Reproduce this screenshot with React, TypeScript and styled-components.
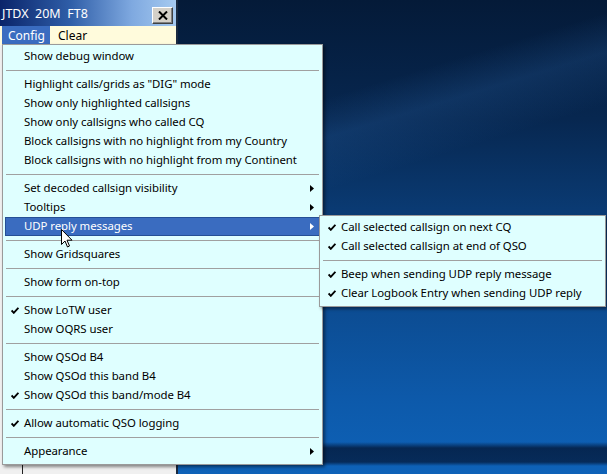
import React from "react";
import styled, { createGlobalStyle } from "styled-components";

const Global = createGlobalStyle`
  html, body { margin: 0; padding: 0; overflow: hidden; }
  body { font-family: "Noto Sans", "Open Sans", sans-serif; }
`;

const Desktop = styled.div`
  position: relative;
  width: 607px;
  height: 474px;
  overflow: hidden;
  display: flex;
  align-items: flex-start;
  background:
    linear-gradient(to bottom, transparent 0, transparent 442px, rgba(3,20,50,0.75) 448px, rgba(3,20,50,0.7) 462px, transparent 466px),
    linear-gradient(163deg, transparent 0, transparent 30%, rgba(60,130,210,0.16) 36%, transparent 44%),
    linear-gradient(to bottom, #041a38 0%, #072750 25%, #0a3b74 45%, #0c4c92 65%, #0d5aab 85%, #0e62b8 100%);
  font-family: "Noto Sans", "Open Sans", sans-serif;
`;

const AppWindow = styled.div`
  width: 176px;
  height: 474px;
  flex: none;
  display: flex;
  flex-direction: column;
  background: #f0f0f0;
  border-right: 2px solid #1a2a40;
`;

const TitleBar = styled.div`
  height: 26px;
  display: flex;
  align-items: center;
  justify-content: space-between;
  padding: 0 3px 0 2px;
  background: linear-gradient(to right, #0a246a 0%, #2f5ea8 40%, #7fa9e0 75%, #a6caf0 100%);
`;

const TitleText = styled.span`
  color: #fff;
  font-size: 12.5px;
  white-space: pre;
  margin-top: 1px;
`;

const CloseButton = styled.div`
  width: 19px;
  height: 15px;
  margin-top: 4px;
  display: flex;
  align-items: center;
  justify-content: center;
  background: #d4d0c8;
  border: 1px solid;
  border-color: #ffffff #404040 #404040 #ffffff;
  box-shadow: inset -1px -1px 0 #808080;
`;

const MenuBar = styled.div`
  height: 19px;
  display: flex;
  align-items: stretch;
  background: #fffbdc;
`;

const BarItem = styled.div<{ $active?: boolean }>`
  display: flex;
  align-items: center;
  padding: ${(p) => (p.$active ? "0 0 0 6px" : "0 0 0 8px")};
  width: ${(p) => (p.$active ? "48px" : "auto")};
  margin-left: ${(p) => (p.$active ? "2px" : "0")};
  box-sizing: border-box;
  font-size: 12px;
  color: ${(p) => (p.$active ? "#fff" : "#000")};
  background: ${(p) => (p.$active ? "#3a6cc0" : "transparent")};
`;

const WindowBody = styled.div`
  flex: 1;
  display: flex;
  background: #f0f0f0;
`;

const Divider = styled.div`
  width: 1px;
  margin-left: 22px;
  background: #202020;
`;

const Menu = styled.div<{ $left: number; $top: number; $width: number }>`
  position: absolute;
  left: ${(p) => p.$left}px;
  top: ${(p) => p.$top}px;
  width: ${(p) => p.$width}px;
  box-sizing: border-box;
  padding: 2px 2px 3px;
  background: #dfffff;
  border: 1px solid #9a9a9a;
  box-shadow: 2px 2px 3px rgba(0, 0, 0, 0.45);
  display: flex;
  flex-direction: column;
`;

const Item = styled.div<{ $active?: boolean }>`
  height: 19px;
  box-sizing: border-box;
  display: grid;
  grid-template-columns: 18px 1fr 14px;
  align-items: center;
  font-size: 11.4px;
  letter-spacing: -0.05px;
  color: ${(p) => (p.$active ? "#fff" : "#000")};
  background: ${(p) => (p.$active ? "#3a6cc0" : "transparent")};
  border: 1px solid ${(p) => (p.$active ? "#254f95" : "transparent")};
  white-space: nowrap;
`;

const Label = styled.span`
  margin-top: -2px;
`;

const Mark = styled.span`
  display: flex;
  align-items: center;
  justify-content: center;
  margin-top: -1px;
`;

const Separator = styled.div`
  height: 9px;
  display: flex;
  align-items: center;
  padding: 0 1px;
  &::after {
    content: "";
    flex: 1;
    height: 1px;
    background: #a0a0a0;
  }
`;

const Check = () => (
  <svg width="8" height="7" viewBox="0 0 8 7">
    <path d="M0.6 3.4 L2.8 5.8 L7.4 0.8" fill="none" stroke="currentColor" strokeWidth="1.9" />
  </svg>
);

const Arrow = () => (
  <svg width="4" height="7" viewBox="0 0 4 7">
    <path d="M0 0 L4 3.5 L0 7 Z" fill="currentColor" />
  </svg>
);

const Cursor = styled.svg`
  position: absolute;
  left: 61px;
  top: 229px;
`;

type Entry = { t: string; check?: boolean; sub?: boolean; active?: boolean } | "sep";

const mainItems: Entry[] = [
  { t: "Show debug window" },
  "sep",
  { t: 'Highlight calls/grids as "DIG" mode' },
  { t: "Show only highlighted callsigns" },
  { t: "Show only callsigns who called CQ" },
  { t: "Block callsigns with no highlight from my Country" },
  { t: "Block callsigns with no highlight from my Continent" },
  "sep",
  { t: "Set decoded callsign visibility", sub: true },
  { t: "Tooltips", sub: true },
  { t: "UDP reply messages", sub: true, active: true },
  "sep",
  { t: "Show Gridsquares" },
  "sep",
  { t: "Show form on-top" },
  "sep",
  { t: "Show LoTW user", check: true },
  { t: "Show OQRS user" },
  "sep",
  { t: "Show QSOd B4" },
  { t: "Show QSOd this band B4" },
  { t: "Show QSOd this band/mode B4", check: true },
  "sep",
  { t: "Allow automatic QSO logging", check: true },
  "sep",
  { t: "Appearance", sub: true },
];

const subItems: Entry[] = [
  { t: "Call selected callsign on next CQ", check: true },
  { t: "Call selected callsign at end of QSO", check: true },
  "sep",
  { t: "Beep when sending UDP reply message", check: true },
  { t: "Clear Logbook Entry when sending UDP reply", check: true },
];

const renderItems = (items: Entry[]) =>
  items.map((e, i) =>
    e === "sep" ? (
      <Separator key={i} />
    ) : (
      <Item key={i} $active={e.active}>
        <Mark>{e.check ? <Check /> : null}</Mark>
        <Label>{e.t}</Label>
        <Mark>{e.sub ? <Arrow /> : null}</Mark>
      </Item>
    )
  );

export default function App() {
  return (
    <Desktop>
      <Global />
      <AppWindow>
        <TitleBar>
          <TitleText>{"JTDX  20M  FT8"}</TitleText>
          <CloseButton>
            <svg width="10" height="9" viewBox="0 0 10 9">
              <path d="M1 0.5 L9 8.5 M9 0.5 L1 8.5" stroke="#000" strokeWidth="2" />
            </svg>
          </CloseButton>
        </TitleBar>
        <MenuBar>
          <BarItem $active>Config</BarItem>
          <BarItem>Clear</BarItem>
        </MenuBar>
        <WindowBody>
          <Divider />
        </WindowBody>
      </AppWindow>
      <Menu $left={2} $top={44} $width={321}>
        {renderItems(mainItems)}
      </Menu>
      <Menu $left={319} $top={215} $width={287}>
        {renderItems(subItems)}
      </Menu>
      <Cursor width="12" height="19" viewBox="0 0 12 19">
        <path d="M0.5 0.5 L0.5 15.5 L4 12 L6.5 18 L8.5 17 L6 11.2 L11 11.2 Z" fill="#fff" stroke="#000" strokeWidth="1" />
      </Cursor>
    </Desktop>
  );
}
